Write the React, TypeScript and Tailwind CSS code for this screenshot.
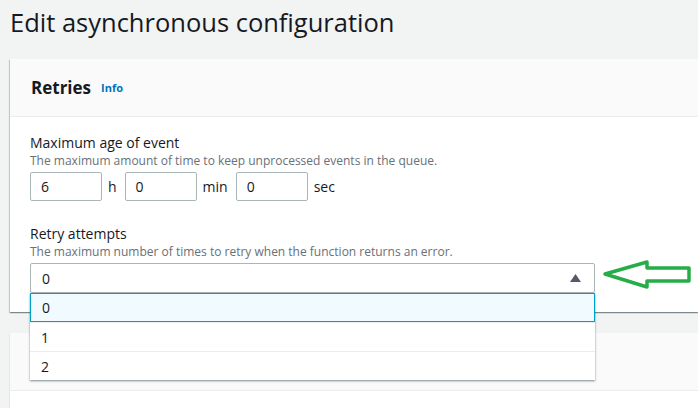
const font = { fontFamily: '"Open Sans", "Noto Sans", Arial, sans-serif' };

const options = ['0', '1', '2'];

function DurationInput({ value, unit }: { value: string; unit: string }) {
  return (
    <div className="flex items-center">
      <div className="flex h-[29px] w-[72px] items-center rounded-[2px] border border-[#aab7b8] bg-white pl-[10px] text-[14px] text-[#16191f]">
        {value}
      </div>
      <span className="ml-[6px] mr-[8px] text-[14px] text-[#16191f]">{unit}</span>
    </div>
  );
}

function GreenArrow() {
  return (
    <svg className="absolute left-[600px] top-[258px]" width="94" height="34" viewBox="600 258 94 34">
      <path
        d="M605 274 L647 262 L647 268 L689 268 L689 281 L647 281 L647 287 Z"
        fill="none"
        stroke="#27ad47"
        strokeWidth="3.5"
        strokeLinejoin="round"
      />
    </svg>
  );
}

export default function App() {
  return (
    <div className="relative h-[408px] w-[698px] overflow-hidden bg-[#f2f3f3]" style={font}>
      <h1 className="pl-[10px] pt-[2px] text-[25.5px] leading-[40px] text-[#16191f]">
        Edit asynchronous configuration
      </h1>

      <section className="ml-[10px] mt-[17px] bg-white shadow-[0_1px_1px_0_rgba(0,28,36,0.3),1px_1px_1px_0_rgba(0,28,36,0.15),-1px_1px_1px_0_rgba(0,28,36,0.15)]">
        <header className="flex h-[58px] items-center border-b border-[#eaeded] bg-[#fafafa] pl-[21px]">
          <h2 className="text-[17px] font-bold text-[#16191f]">Retries</h2>
          <span className="ml-[10px] mt-[2px] text-[11px] font-bold text-[#0073bb]">Info</span>
        </header>

        <div className="px-[20px] pb-[19px] pt-[16px]">
          <div>
            <p className="text-[14px] leading-[20px] text-[#16191f]">Maximum age of event</p>
            <p className="text-[12px] leading-[16px] text-[#687078]">
              The maximum amount of time to keep unprocessed events in the queue.
            </p>
            <div className="mt-[3px] flex">
              <DurationInput value="6" unit="h" />
              <DurationInput value="0" unit="min" />
              <DurationInput value="0" unit="sec" />
            </div>
          </div>

          <div className="mt-[23px]">
            <p className="text-[14px] leading-[20px] text-[#16191f]">Retry attempts</p>
            <p className="text-[12px] leading-[16px] text-[#687078]">
              The maximum number of times to retry when the function returns an error.
            </p>
            <div className="relative mt-[3px] w-[565px]">
              <div className="flex h-[30px] items-center justify-between rounded-[2px] border border-[#aab7b8] bg-white pl-[11px] pr-[13px] text-[14px] text-[#16191f]">
                <span>0</span>
                <svg width="11" height="8" viewBox="0 0 11 8">
                  <path d="M0 8 L5.5 0 L11 8 Z" fill="#545b64" />
                </svg>
              </div>
              <ul className="absolute left-0 top-full z-10 w-full bg-white shadow-[0_1px_2px_0_rgba(0,28,36,0.5)]">
                {options.map((opt, i) => (
                  <li
                    key={opt}
                    className={
                      i === 0
                        ? 'flex h-[29px] items-center border border-[#00a1c9] bg-[#f1faff] pl-[11px] text-[14px] text-[#16191f]'
                        : 'flex h-[29px] items-center border-t border-[#eaeded] pl-[11px] text-[14px] text-[#16191f]'
                    }
                  >
                    {opt}
                  </li>
                ))}
              </ul>
            </div>
          </div>
        </div>
      </section>

      <section className="ml-[10px] mt-[21px] bg-white shadow-[0_1px_1px_0_rgba(0,28,36,0.3)]">
        <header className="h-[58px] border-b border-[#eaeded] bg-[#fafafa]" />
        <div className="h-[40px]" />
      </section>

      <GreenArrow />
    </div>
  );
}
